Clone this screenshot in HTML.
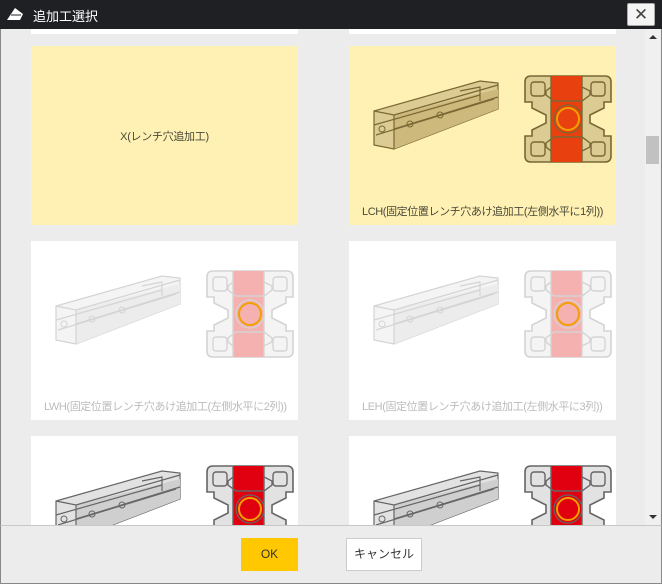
<!DOCTYPE html>
<html><head><meta charset="utf-8"><style>
*{margin:0;padding:0;box-sizing:border-box}
html,body{width:662px;height:584px;overflow:hidden}
body{background:#ececec;font-family:"Liberation Sans","Noto Sans CJK JP",sans-serif;position:relative}
.title{position:absolute;left:0;top:0;width:662px;height:29px;background:#1f2023;color:#fff;font-size:13px}
.title span{position:absolute;left:33px;top:6px}
.close{position:absolute;left:627px;top:3px;width:28px;height:23px;background:#f4f4f4;border:1px solid #aaa;border-radius:2px;color:#444;font-size:17px;text-align:center;line-height:21px}
.content{position:absolute;left:0;top:29px;width:662px;height:496px;background:#ececec;overflow:hidden;border-left:1px solid #888;border-right:1px solid #888}
.card{position:absolute;width:267px;height:179px;background:#fff;overflow:hidden}
.card.y{background:#fff0b3}
.lbl{position:absolute;left:13px;top:157px;font-size:11px;letter-spacing:-0.4px;color:#4a4a3a;white-space:nowrap}
.fade .lbl{color:#bbb}
.prof{position:absolute;left:175px;top:29px;width:88px;height:88px}
.ext{position:absolute;left:21px;top:33px;width:130px;height:72px}
.sb{position:absolute;left:644px;top:0;width:15px;height:496px;background:#f0f0f0}
.footer{position:absolute;left:0;top:525px;width:662px;height:59px;background:#ececec;border-top:1px solid #c8c8c8;border-left:1px solid #888;border-right:1px solid #888;border-bottom:1px solid #888}
.ok{position:absolute;left:240px;top:12px;width:57px;height:33px;background:#ffc800;font-size:12px;color:#333;text-align:center;line-height:33px}
.cancel{position:absolute;left:345px;top:12px;width:76px;height:33px;background:#fff;border:1px solid #ccc;font-size:12px;color:#333;text-align:center;line-height:31px}
</style></head><body>
<svg width="0" height="0" style="position:absolute;left:0;top:0">
<defs>
<symbol id="pf" viewBox="0 0 88 88">
<path d="M7,1 H81 Q87,1 87,7 V27 H80 V33 L66,40 V48 L80,55 V61 H87 V81 Q87,87 81,87 H7 Q1,87 1,81 V61 H8 V55 L22,48 V40 L8,33 V27 H1 V7 Q1,1 7,1Z" fill="var(--f)" stroke="var(--s)" stroke-width="1.6"/>
<rect x="27" y="1" width="31" height="86" fill="var(--r)"/>
<path d="M27,1 V12 L22,16 V20 L30,26 H58 L66,20 V16 L58,12 V1 M27,87 V76 L22,72 V68 L30,62 H58 L66,68 V72 L58,76 V87 M27,1 V87 M58,1 V87" fill="none" stroke="var(--s)" stroke-width="1.4"/>
<rect x="7" y="7" width="14" height="14" rx="3" fill="none" stroke="var(--s)" stroke-width="1.4"/>
<rect x="67" y="7" width="14" height="14" rx="3" fill="none" stroke="var(--s)" stroke-width="1.4"/>
<rect x="7" y="67" width="14" height="14" rx="3" fill="none" stroke="var(--s)" stroke-width="1.4"/>
<rect x="67" y="67" width="14" height="14" rx="3" fill="none" stroke="var(--s)" stroke-width="1.4"/>
<circle cx="44" cy="44" r="14" fill="none" stroke="var(--s)" stroke-width="1.2"/>
<circle cx="44" cy="44" r="11" fill="var(--r)" stroke="#f0a000" stroke-width="2"/>
</symbol>
<symbol id="ex" viewBox="0 0 130 72">
<path d="M4,32 L110,2 L128,4 L128,30 L24,70 L4,66Z" fill="var(--f)" stroke="var(--s)" stroke-width="1.2"/>
<path d="M24,36 L128,10 V30 L24,70Z" fill="var(--d)"/>
<path d="M4,32 L24,36 L128,6 M24,36 V70 M4,46 L110,16 M6,56 L124,20 M24,50 L128,18 M90,12 L110,8 V22" fill="none" stroke="var(--s)" stroke-width="1.2"/>
<circle cx="12" cy="50" r="3" fill="none" stroke="var(--s)"/><circle cx="40" cy="45" r="3" fill="none" stroke="var(--s)"/><circle cx="70" cy="36" r="3" fill="none" stroke="var(--s)"/>
</symbol>
</defs></svg>
<div class="title">
<svg style="position:absolute;left:6px;top:7px" width="18" height="14" viewBox="0 0 18 14"><path d="M1,13 L9,1 L17,7 L14,13Z" fill="#fff"/><path d="M5,8 L15,8" stroke="#1f2023"/></svg>
<span>追加工選択</span><div class="close">✕</div></div>
<div class="content">
<div class="card" style="left:30px;top:-174px"></div>
<div class="card" style="left:348px;top:-174px"></div>
<div class="card y" style="left:30px;top:17px"><div style="position:absolute;left:0;width:267px;top:82px;text-align:center;font-size:11px;letter-spacing:-0.3px;color:#4a4a3a">X(レンチ穴追加工)</div></div>
<div class="card y" style="left:348px;top:17px;--f:#dccb92;--d:#cdb97c;--s:#7a6834;--r:#e8400f">
<svg class="ext"><use href="#ex"/></svg><svg class="prof"><use href="#pf"/></svg>
<div class="lbl">LCH(固定位置レンチ穴あけ追加工(左側水平に1列))</div></div>
<div class="card fade" style="left:30px;top:212px;--f:#f4f4f4;--d:#ececec;--s:#d4d4d4;--r:#f5b0b0">
<svg class="ext"><use href="#ex"/></svg><svg class="prof"><use href="#pf"/></svg>
<div class="lbl">LWH(固定位置レンチ穴あけ追加工(左側水平に2列))</div></div>
<div class="card fade" style="left:348px;top:212px;--f:#f4f4f4;--d:#ececec;--s:#d4d4d4;--r:#f5b0b0">
<svg class="ext"><use href="#ex"/></svg><svg class="prof"><use href="#pf"/></svg>
<div class="lbl">LEH(固定位置レンチ穴あけ追加工(左側水平に3列))</div></div>
<div class="card" style="left:30px;top:407px;--f:#e2e2e2;--d:#cfcfcf;--s:#666;--r:#e0000f">
<svg class="ext"><use href="#ex"/></svg><svg class="prof"><use href="#pf"/></svg></div>
<div class="card" style="left:348px;top:407px;--f:#e2e2e2;--d:#cfcfcf;--s:#666;--r:#e0000f">
<svg class="ext"><use href="#ex"/></svg><svg class="prof"><use href="#pf"/></svg></div>
<div class="sb">
<div style="position:absolute;left:4px;top:6px;border:4px solid transparent;border-bottom:4px solid #333;border-top:0;width:0"></div>
<div style="position:absolute;left:1px;top:107px;width:13px;height:28px;background:#c1c1c1"></div>
<div style="position:absolute;left:4px;top:486px;border:4px solid transparent;border-top:4px solid #333;border-bottom:0;width:0"></div>
</div>
</div>
<div class="footer"><div class="ok">OK</div><div class="cancel">キャンセル</div></div>
</body></html>
